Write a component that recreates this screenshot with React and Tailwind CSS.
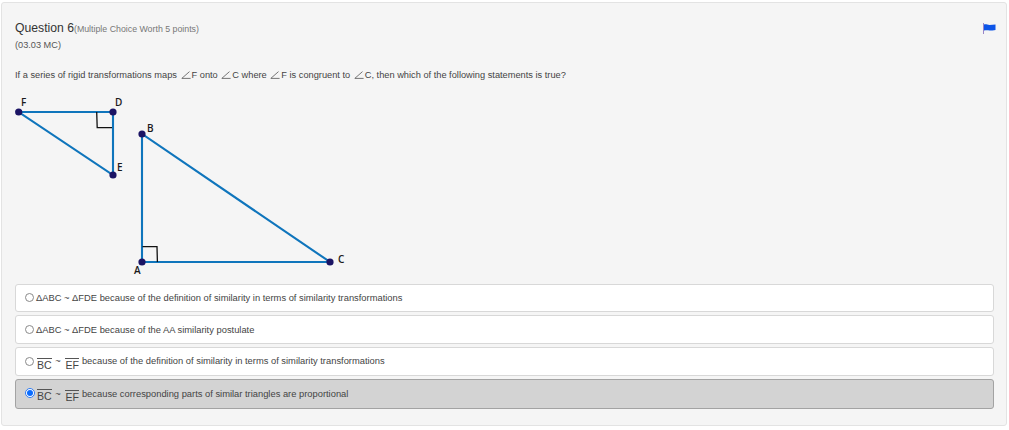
const Angle = () => (
  <svg width="10" height="8" viewBox="0 0 10 8" className="inline-block mx-[1px] align-[-0.5px]">
    <path d="M8.5 0.6 L0.8 7.4 H9.6" fill="none" stroke="#555" strokeWidth="0.8" />
  </svg>
);

const Over = ({ children, className = "" }) => (
  <span className={"inline-block border-t border-[#555] pt-[1px] text-[10.6px] leading-[11px] mx-[1px] " + className}>{children}</span>
);

const Diagram = () => (
  <svg width="350" height="194" viewBox="0 0 350 194" className="block">
    <g fill="none" stroke="#0f75bc" strokeWidth="2.1">
      <path d="M3.7 22 H98 V85 Z" />
      <path d="M127 44 V172 H315 Z" />
    </g>
    <g fill="none" stroke="#111" strokeWidth="1.3">
      <path d="M81.7 22 L82.2 37.7 H97" />
      <path d="M127.5 156.7 H142 L142.4 172" />
    </g>
    <g fill="#1b1464">
      <circle cx="3.7" cy="22" r="3.6" />
      <circle cx="98" cy="22" r="3.6" />
      <circle cx="98" cy="85" r="3.6" />
      <circle cx="127" cy="44" r="3.6" />
      <circle cx="127" cy="172" r="3.6" />
      <circle cx="315" cy="172" r="3.6" />
    </g>
    <g fontFamily="'Open Sans', sans-serif" fontSize="10" fontWeight="600" fill="#1a1a1a">
      <text x="6" y="16">F</text>
      <text x="100" y="16">D</text>
      <text x="102" y="80.5">E</text>
      <text x="132" y="41.5">B</text>
      <text x="119" y="184">A</text>
      <text x="323" y="173">C</text>
    </g>
  </svg>
);

const Radio = ({ checked, className }) =>
  checked ? (
    <span className={"w-[10px] h-[10px] rounded-full shrink-0 bg-white border border-[#2f7bf0] flex items-center justify-center " + className}>
      <span className="w-[6px] h-[6px] rounded-full bg-[#0a6cff]" />
    </span>
  ) : (
    <span className={"w-[9px] h-[9px] rounded-full shrink-0 bg-white border border-[#8a8a8a] " + className} />
  );

const Option = ({ checked, className, radio, children }) => (
  <div
    className={
      "flex items-start pl-[9px] rounded-[3px] border " +
      (checked ? "bg-[#d3d3d3] border-[#a3a3a3] " : "bg-white border-[#d8d8d8] ") +
      className
    }
  >
    <Radio checked={checked} className={radio} />
    <div className={"text-[9.35px] leading-[13px] text-[#444] whitespace-nowrap " + (checked ? "ml-[1px]" : "ml-[2px]")}>{children}</div>
  </div>
);

export default function App() {
  return (
    <div className="w-[1009px] h-[430px] bg-white overflow-hidden font-['Liberation_Sans',Arial,sans-serif]">
      <div className="ml-[1px] mt-[2px] w-[1006px] h-[424px] bg-[#f5f5f5] border border-[#e3e3e3] rounded-[3px] pl-[13px] pr-[12px] pt-[17px] relative">
        <div className="flex items-baseline h-[16px] leading-[16px]">
          <span className="text-[12.2px] text-[#333]">Question 6</span>
          <span className="text-[8.8px] text-[#777]">(Multiple Choice Worth 5 points)</span>
        </div>
        <div className="mt-[3px] text-[9.2px] leading-[13px] text-[#555]">(03.03 MC)</div>
        <div className="mt-[17px] text-[9.25px] leading-[13px] text-[#444] whitespace-nowrap h-[13px]">
          If a series of rigid transformations maps <Angle />F onto <Angle />C where <Angle />F is congruent to <Angle />C, then which of the following statements is true?
        </div>
        <div className="mt-[8px]">
          <Diagram />
        </div>
        <div className="flex flex-col gap-[3px]">
          <Option className="h-[28px] pt-[7px]" radio="mt-[1px]">
            ΔABC ~ ΔFDE because of the definition of similarity in terms of similarity transformations
          </Option>
          <Option className="h-[29px] pt-[8px]" radio="mt-[1px]">ΔABC ~ ΔFDE because of the AA similarity postulate</Option>
          <Option className="h-[29px] pt-[7px]" radio="mt-[2px]">
            <Over className="align-[-5px]">BC</Over> ~ <Over className="ml-[2px] align-[-5px]">EF</Over><span className="ml-[2px]">because of the definition of similarity in terms of similarity transformations</span>
          </Option>
          <Option checked className="h-[30px] pt-[8px]" radio="mt-[0px]">
            <Over className="align-[-3px]">BC</Over> ~ <Over className="ml-[2px] align-[-4px]">EF</Over><span className="ml-[2px]">because corresponding parts of similar triangles are proportional</span>
          </Option>
        </div>
        <svg width="13" height="11" viewBox="0 0 13 11" className="absolute right-[10px] top-[20px]">
          <path d="M0.5 0 V11" stroke="#9a86c8" strokeWidth="1" />
          <path d="M1 1.5 C3 1 4.5 2 6.5 2 C8.5 2 10.5 1.5 12.5 1.5 V7 C10.5 7.5 8.5 7.5 6.5 7.5 C4.5 7 3 7 1 7.5 Z" fill="#0d55e8" />
        </svg>
      </div>
    </div>
  );
}
